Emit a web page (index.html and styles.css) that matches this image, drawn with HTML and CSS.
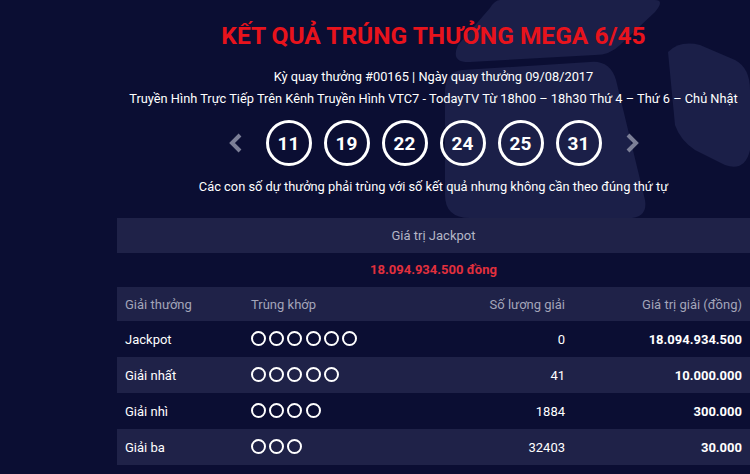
FILE: index.html
```html
<!DOCTYPE html>
<html lang="vi">
<head>
<meta charset="utf-8">
<title>Kết quả Mega 6/45</title>
<link rel="stylesheet" href="styles.css">
</head>
<body>
<div class="page">
  <svg class="bg-deco" width="750" height="474" viewBox="0 0 750 474" aria-hidden="true">
    <path d="M500 0 L655 0 Q665 0 655 12 L620 45 Q610 55 595 55 L470 62 Q450 63 458 45 L490 8 Q495 0 500 0 Z"/>
    <path d="M668 52 Q680 40 700 45 L735 60 Q750 68 750 90 L750 150 Q745 172 725 165 L695 150 Q680 140 675 125 Z"/>
    <path d="M462 70 L590 62 Q610 60 616 80 L645 200 Q648 218 628 218 L470 218 Q445 218 445 195 L445 90 Q446 72 462 70 Z"/>
  </svg>
  <main class="content">
    <h1 class="title">KẾT QUẢ TRÚNG THƯỞNG MEGA 6/45</h1>
    <p class="info">Kỳ quay thưởng #00165 | Ngày quay thưởng 09/08/2017</p>
    <p class="info">Truyền Hình Trực Tiếp Trên Kênh Truyền Hình VTC7 - TodayTV Từ 18h00 – 18h30 Thứ 4 – Thứ 6 – Chủ Nhật</p>
    <div class="balls">
      <svg class="chev" width="14" height="20" viewBox="0 0 14 20"><path d="M11 2 L3 10 L11 18"/></svg>
      <span class="ball">11</span>
      <span class="ball">19</span>
      <span class="ball">22</span>
      <span class="ball">24</span>
      <span class="ball">25</span>
      <span class="ball">31</span>
      <svg class="chev" width="14" height="20" viewBox="0 0 14 20"><path d="M3 2 L11 10 L3 18"/></svg>
    </div>
    <p class="note">Các con số dự thưởng phải trùng với số kết quả nhưng không cần theo đúng thứ tự</p>
    <section class="results">
      <div class="jp-head">Giá trị Jackpot</div>
      <div class="jp-value">18.094.934.500 đồng</div>
      <div class="row head">
        <span>Giải thưởng</span>
        <span>Trùng khớp</span>
        <span class="r">Số lượng giải</span>
        <span class="r">Giá trị giải (đồng)</span>
      </div>
      <div class="row">
        <span>Jackpot</span>
        <span class="dots"><i></i><i></i><i></i><i></i><i></i><i></i></span>
        <span class="r">0</span>
        <span class="r b">18.094.934.500</span>
      </div>
      <div class="row alt">
        <span>Giải nhất</span>
        <span class="dots"><i></i><i></i><i></i><i></i><i></i></span>
        <span class="r">41</span>
        <span class="r b">10.000.000</span>
      </div>
      <div class="row">
        <span>Giải nhì</span>
        <span class="dots"><i></i><i></i><i></i><i></i></span>
        <span class="r">1884</span>
        <span class="r b">300.000</span>
      </div>
      <div class="row alt">
        <span>Giải ba</span>
        <span class="dots"><i></i><i></i><i></i></span>
        <span class="r">32403</span>
        <span class="r b">30.000</span>
      </div>
    </section>
  </main>
</div>
</body>
</html>
```
FILE: styles.css
```css
* { box-sizing: border-box; }
html, body {
  margin: 0;
  padding: 0;
  background: #0b0e33;
}
body {
  font-family: Roboto, "Noto Sans", "DejaVu Sans", sans-serif;
  color: #ffffff;
  width: 750px;
  height: 474px;
  overflow: hidden;
}
.page {
  position: relative;
  width: 750px;
  height: 474px;
}
.bg-deco {
  position: absolute;
  left: 0;
  top: 0;
  fill: #1b1f48;
}
.content {
  position: relative;
  margin-left: 117px;
  width: 633px;
  padding-top: 22px;
  text-align: center;
}
.title {
  margin: 0 0 16px;
  font-size: 24.5px;
  line-height: 28px;
  font-weight: 700;
  color: #e8131c;
}
.info {
  margin: 0;
  font-size: 12.8px;
  line-height: 22px;
}
.balls {
  margin-top: 10px;
  display: flex;
  justify-content: center;
  align-items: center;
  gap: 12px;
  height: 46px;
}
.chev {
  fill: none;
  stroke: #7c7f97;
  stroke-width: 4;
  margin: 0 11px;
}
.ball {
  width: 46px;
  height: 46px;
  border: 3px solid #ffffff;
  border-radius: 50%;
  display: flex;
  align-items: center;
  justify-content: center;
  font-size: 19px;
  font-weight: 700;
}
.note {
  margin: 10px 0 0;
  font-size: 12.85px;
  line-height: 22px;
}
.results {
  margin-top: 20px;
}
.jp-head {
  height: 35px;
  line-height: 35px;
  background: #1f2248;
  color: #b4b6c6;
  font-size: 13px;
}
.jp-value {
  height: 34px;
  line-height: 34px;
  color: #e2303d;
  font-weight: 700;
  font-size: 13px;
}
.row {
  display: grid;
  grid-template-columns: 126px 200px 130px 177px;
  align-items: center;
  height: 36px;
  font-size: 13px;
  text-align: left;
}
.row > span { padding: 0 8px; }
.row.head {
  height: 34px;
  background: #1f2248;
  color: #a3a5b9;
}
.row.alt { background: #1f2248; }
.r { text-align: right; }
.b { font-weight: 700; }
.dots {
  display: flex;
  gap: 3.2px;
  padding-bottom: 2px !important;
}
.dots i {
  width: 15px;
  height: 15px;
  border: 2px solid #ffffff;
  border-radius: 50%;
}
```
